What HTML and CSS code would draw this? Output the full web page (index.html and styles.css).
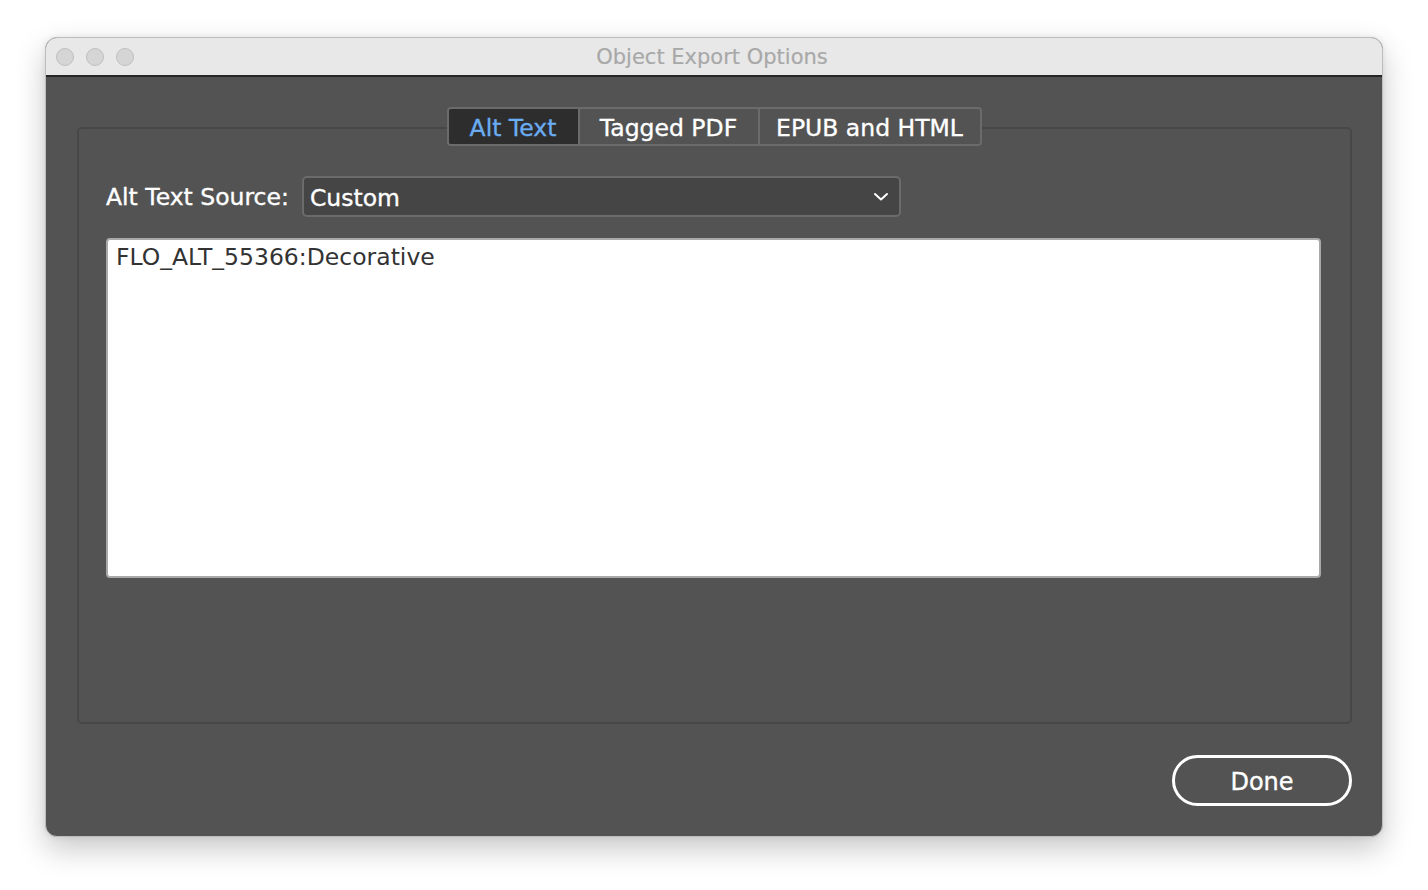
FILE: index.html
```html
<!DOCTYPE html>
<html>
<head>
<meta charset="utf-8">
<title>Object Export Options</title>
<link rel="stylesheet" href="styles.css">
</head>
<body>
<div class="window">
  <div class="titlebar">
    <div class="lights">
      <span class="light"></span>
      <span class="light"></span>
      <span class="light"></span>
    </div>
    <div class="title">Object Export Options</div>
  </div>
  <div class="content">
    <div class="tabs">
      <div class="tab active">Alt Text</div>
      <div class="tab">Tagged PDF</div>
      <div class="tab">EPUB and HTML</div>
    </div>
    <div class="group">
      <div class="source-row">
        <span class="label">Alt Text Source:</span>
        <div class="select">
          <span>Custom</span>
          <svg class="chev" width="16" height="10" viewBox="0 0 16 10"><path d="M2 2 L8 7.5 L14 2" fill="none" stroke="#ffffff" stroke-width="2" stroke-linecap="round" stroke-linejoin="round"/></svg>
        </div>
      </div>
      <div class="textarea">FLO_ALT_55366:Decorative</div>
    </div>
    <div class="footer">
      <div class="done">Done</div>
    </div>
  </div>
</div>
</body>
</html>
```

FILE: styles.css
```css
html, body {
  margin: 0;
  padding: 0;
  background: #ffffff;
  width: 1428px;
  height: 890px;
  overflow: hidden;
}
body {
  font-family: "DejaVu Sans", "Liberation Sans", sans-serif;
}
.window {
  margin: 37px 0 0 45px;
  width: 1338px;
  height: 800px;
  box-sizing: border-box;
  border-radius: 12px;
  border: 1px solid #bdbdbd;
  background: #535353;
  box-shadow: 0 12px 30px rgba(0,0,0,0.22), 0 0 6px rgba(0,0,0,0.08);
  overflow: hidden;
  display: flex;
  flex-direction: column;
}
.titlebar {
  height: 37px;
  flex: none;
  background: #e8e8e8;
  border-bottom: 2px solid #262626;
  display: flex;
  align-items: center;
}
.lights {
  display: flex;
  gap: 12px;
  padding-left: 10px;
}
.light {
  width: 16px;
  height: 16px;
  border-radius: 50%;
  background: #d5d5d5;
  border: 1px solid #bfbfbf;
}
.title {
  flex: 1;
  text-align: center;
  margin-right: 112px;
  margin-left: 20px;
  color: #a8a8a8;
  font-size: 21px;
  -webkit-text-stroke: 0.2px #a8a8a8;
}
.content {
  flex: 1;
  display: flex;
  flex-direction: column;
  padding: 30px 30px 0 30px;
}
.tabs {
  align-self: center;
  display: flex;
  height: 39px;
  box-sizing: border-box;
  border: 2px solid #6b6b6b;
  border-radius: 4px;
  background: #535353;
  margin-bottom: -19px;
  position: relative;
  z-index: 1;
  overflow: hidden;
}
.tab {
  display: flex;
  align-items: center;
  justify-content: center;
  color: #ffffff;
  font-size: 23.5px;
  border-left: 2px solid #6b6b6b;
  padding-top: 2px;
  box-sizing: border-box;
  -webkit-text-stroke: 0.35px currentColor;
}
.tab:nth-child(1) { width: 129px; border-left: none; }
.tab:nth-child(2) { width: 180px; }
.tab:nth-child(3) { width: 222px; }
.tab.active {
  background: #2d2d2d;
  color: #6aacf2;
}
.group {
  height: 597px;
  box-sizing: border-box;
  border: 2px solid #474747;
  border-radius: 5px;
  padding: 47px 29px 0 27px;
  margin-left: 1px;
}
.source-row {
  display: flex;
  align-items: center;
  gap: 13px;
}
.label {
  color: #ffffff;
  font-size: 23.5px;
  -webkit-text-stroke: 0.35px currentColor;
}
.select {
  width: 599px;
  height: 41px;
  box-sizing: border-box;
  border: 2px solid #6b6b6b;
  border-radius: 5px;
  background: #454545;
  display: flex;
  align-items: center;
  justify-content: space-between;
  padding: 2px 10px 0 6px;
  color: #ffffff;
  font-size: 23.5px;
  -webkit-text-stroke: 0.35px currentColor;
}
.chev {
  display: block;
  margin-top: -2px;
}
.textarea {
  margin-top: 21px;
  height: 340px;
  box-sizing: border-box;
  background: #ffffff;
  border: 2px solid #a9a9a9;
  border-radius: 4px;
  padding: 3px 8px;
  color: #333333;
  font-size: 23.5px;
}
.footer {
  display: flex;
  justify-content: flex-end;
  margin-top: 31px;
}
.done {
  width: 180px;
  height: 51px;
  box-sizing: border-box;
  border: 3px solid #ffffff;
  border-radius: 26px;
  display: flex;
  align-items: center;
  justify-content: center;
  color: #ffffff;
  font-size: 24px;
  padding-top: 2px;
  -webkit-text-stroke: 0.35px currentColor;
}
```
